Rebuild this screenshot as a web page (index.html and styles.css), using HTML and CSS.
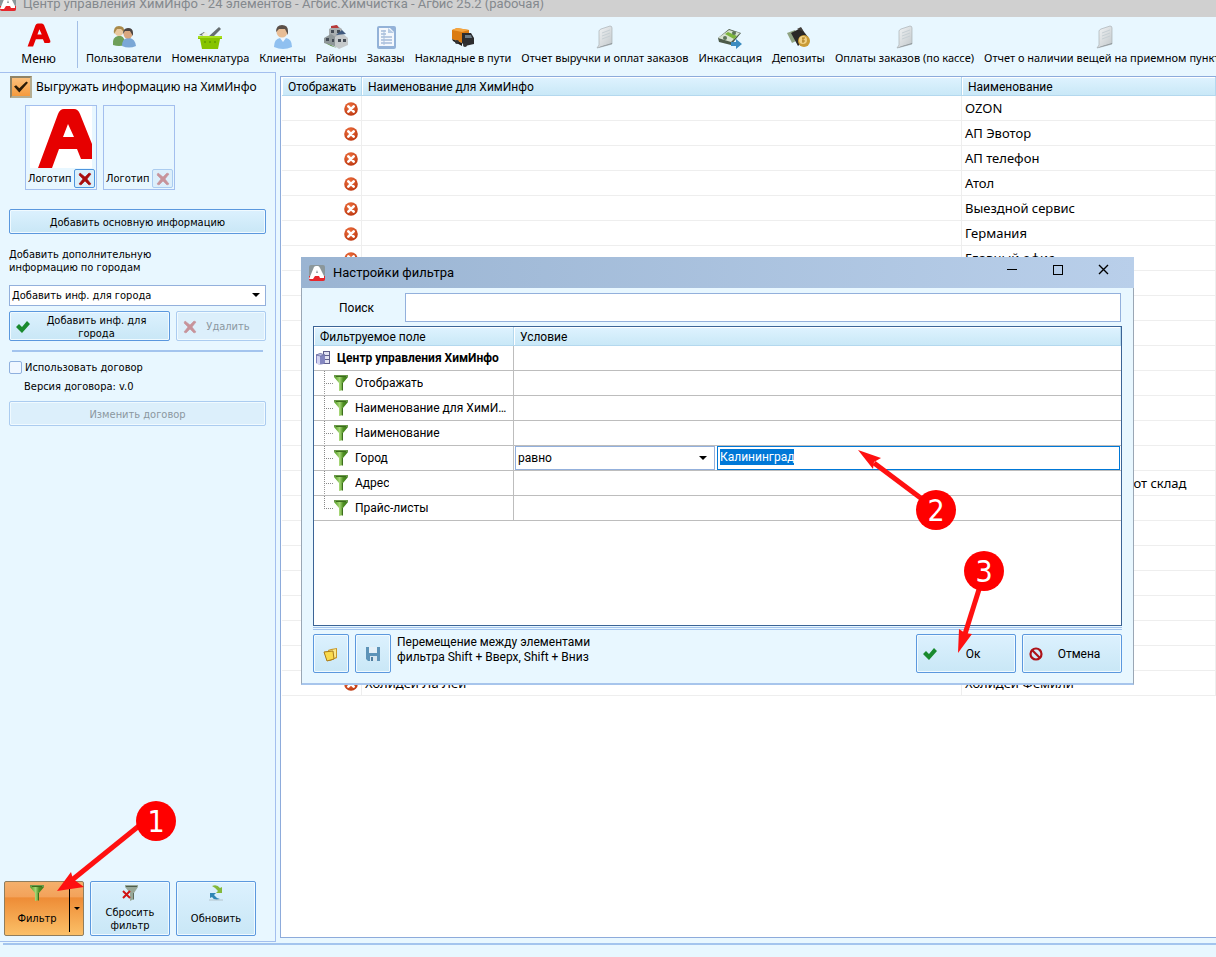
FILE: index.html
```html
<!DOCTYPE html>
<html lang="ru">
<head>
  <meta charset="UTF-8">
  <title>Центр управления ХимИнфо</title>
  <link rel="stylesheet" href="styles.css">
</head>
<body>
  <!-- общие иконки -->
  <svg class="defs" width="0" height="0">
    <defs>
      <linearGradient id="gFunnel" x1="0" x2="1" y1="0" y2="0">
        <stop offset="0" stop-color="#4d9a1c"/><stop offset=".4" stop-color="#a5d675"/><stop offset=".65" stop-color="#4f8f22"/><stop offset="1" stop-color="#3b7a1a"/>
      </linearGradient>
      <radialGradient id="gCross" cx=".4" cy=".3" r=".8">
        <stop offset="0" stop-color="#f0713f"/><stop offset="1" stop-color="#b8330c"/>
      </radialGradient>
      <linearGradient id="gSheet" x1="0" x2="1" y1="0" y2="1">
        <stop offset="0" stop-color="#f3f5f6"/><stop offset="1" stop-color="#c2c8cb"/>
      </linearGradient>
      <symbol id="logo" viewBox="7 2 60 61">
        <path fill="#e60000" fill-rule="evenodd" d="M8 62L28 8Q30 3 34 3H44Q48 3 50 8L66 48Q67 53 62 53H51L47 43H29L22 62ZM33 31L38 18L44 31Z"/>
      </symbol>
      <symbol id="appicon" viewBox="0 0 16 16">
        <rect width="16" height="16" rx="2" fill="#8b979b"/>
        <path fill="#e8262c" d="M0 11H16V14Q16 16 14 16H2Q0 16 0 14Z"/>
        <path fill="#fff" fill-rule="evenodd" d="M0 14L5 2Q6 1 7 1H9Q10 1 11 3L15 11V13H11L10 11H6L4 14ZM7 8L8 5L9 8Z"/>
      </symbol>
      <symbol id="no" viewBox="0 0 14 14">
        <circle cx="7" cy="7" r="6.800" fill="url(#gCross)"/>
        <path d="M4.300 4.300L9.700 9.700M9.700 4.300L4.300 9.700" stroke="#fff" stroke-width="2.600" stroke-linecap="round"/>
      </symbol>
      <symbol id="funnel" viewBox="0 0 14 16">
        <path d="M0 0H14V2L9 8V15L5 16V8L0 2Z" fill="url(#gFunnel)"/>
        <path d="M0 0H14V2H0Z" fill="#6a9a4a"/><path d="M2 1H12V2H2Z" fill="#3c6b1c"/>
        <path d="M8 8H9V15L8 16Z" fill="#3d6d1e"/>
      </symbol>
      <symbol id="check" viewBox="0 0 14 12">
        <path d="M0 6L3 3L6 6L11 0L14 3L6 12Z" fill="#1a8a2e"/>
      </symbol>
      <symbol id="cross" viewBox="0 0 14 14">
        <path d="M2 1L7 5L11 1L13 2L9 7L13 12L11 13L7 9L3 13L1 12L5 7L1 3Z" fill="#a80c0c" stroke="#a80c0c" stroke-width=".6"/>
      </symbol>
      <symbol id="sheet" viewBox="0 0 24 24">
        <path d="M8 4L17 1Q19 1 19 3V19L8 22L4 23L6 20V6Q6 5 8 4Z" fill="url(#gSheet)" stroke="#aab2b6" stroke-width=".7"/>
        <path d="M9 8L17 5M9 11L17 8M9 14L17 11" stroke="#c6cfd4"/>
        <path d="M4 23L9 21L19 18V19L8 22Z" fill="#8f979b"/>
      </symbol>
    </defs>
  </svg>

  <div class="titlebar">
    <svg class="app-icon" width="16" height="16"><use href="#appicon"/></svg>
    <span>Центр управления ХимИнфо - 24 элементов - Агбис.Химчистка - Агбис 25.2 (рабочая)</span>
  </div>

  <div class="toolbar">
    <button class="menu"><svg width="24" height="24"><use href="#logo"/></svg>Меню</button>
    <button class="tool">
      <svg width="24" height="24" viewBox="0 0 24 24">
        <path d="M1 20Q0 12 6 11H9Q13 12 13 20Q7 22 1 20Z" fill="#6e9f58"/>
        <circle cx="7" cy="6.500" r="4.500" fill="#e9c9a0"/><path d="M2 9Q1 1 7 1T12 7L9 4H5Z" fill="#a98a4b"/>
        <path d="M10 21Q10 14 15 13H18Q23 14 24 21Q17 24 10 21Z" fill="#7ba7d6"/>
        <circle cx="16" cy="9" r="4.500" fill="#d9a77f"/><path d="M11 9Q11 3 16 3T21 8V11L18 6H13Z" fill="#4b4442"/>
      </svg>Пользователи</button>
    <button class="tool">
      <svg width="24" height="24" viewBox="0 0 24 24">
        <path d="M1 10L6 7L10 12L21 2L23 4L15 12Z" fill="#666e70"/><path d="M4 9L8 7L11 11H5Z" fill="#eef0e6"/>
        <path d="M0 11H24V14H22L20 24H4L2 14H0Z" fill="#86c400"/>
        <path d="M0 11H24V13H0Z" fill="#a7df1d"/>
        <path d="M6 16H8V18H6ZM11 16H13V18H11ZM16 16H18V18H16Z" fill="#6aa600"/>
      </svg>Номенклатура</button>
    <button class="tool">
      <svg width="24" height="24" viewBox="0 0 24 24">
        <path d="M3 22Q3 14 9 13H15Q21 14 21 22Q12 26 3 22Z" fill="#8fc0f0"/><path d="M9 13L12 17L15 13Z" fill="#eef6ff"/>
        <circle cx="11" cy="7" r="5.500" fill="#e8bd95"/><path d="M5 7Q5 0 11 0T17 6V10L14 4H8Z" fill="#5b5049"/>
      </svg>Клиенты</button>
    <button class="tool">
      <svg width="24" height="24" viewBox="0 0 24 24">
        <path d="M5 4L12 0L18 4V12H5Z" fill="#a9aeb0"/><path d="M7 1L13 0L15 3H7Z" fill="#b83a3a"/>
        <path d="M0 13L7 9L13 13V22L7 20L0 18Z" fill="#8f9799"/><path d="M11 12L18 8L24 13V20L15 24L11 21Z" fill="#c5c9cb"/>
        <path d="M7 5H10V8H7ZM13 5H16V8H13ZM2 13H5V16H2ZM8 14H10V17H8ZM14 14H17V17H14ZM19 14H22V17H19Z" fill="#454c55"/>
        <path d="M12 10L18 5L22 9Z" fill="#3f597e"/><path d="M1 18L7 20L13 23L7 21Z" fill="#57863c"/>
      </svg>Районы</button>
    <button class="tool">
      <svg width="24" height="24" viewBox="0 0 24 24">
        <rect x="3" y="1" width="19" height="23" rx="2" fill="#93b2d8"/><path d="M5 3H16L20 7V21H5Z" fill="#f4f8fd"/>
        <path d="M14 3L20 8H14Z" fill="#b6cbe5"/>
        <path d="M7 6H12M7 9H12M7 12H18M7 15H18M7 18H18" stroke="#7e9dc8"/><path d="M10 5V20" stroke="#a9c0dd"/>
      </svg>Заказы</button>
    <button class="tool">
      <svg width="24" height="24" viewBox="0 0 24 24">
        <path d="M1 5L6 3L18 5V16L11 18L1 14Z" fill="#db7c12"/><path d="M1 5L6 3L18 5L11 7Z" fill="#f6a640"/>
        <path d="M11 8L20 8L23 13V19L14 21L11 18Z" fill="#2d2d2f"/><path d="M14 10L20 10L21 13H14Z" fill="#6d7c86"/>
        <path d="M1 14L11 18V21L2 16Z" fill="#1e1a17"/><circle cx="14" cy="20" r="2" fill="#333"/><circle cx="6" cy="17" r="2" fill="#333"/>
      </svg>Накладные в пути</button>
    <button class="tool"><svg width="24" height="24"><use href="#sheet"/></svg>Отчет выручки и оплат заказов</button>
    <button class="tool">
      <svg width="24" height="24" viewBox="0 0 24 24">
        <path d="M0 13L11 4L23 8L13 20L1 17Z" fill="#4c5a49"/><path d="M0 13L11 5L22 8L13 17Z" fill="#d7e2d1"/>
        <path d="M7 9L10 7L19 11L16 14Z" fill="#7cb43c"/><circle cx="7" cy="13" r="2" fill="#5d7358"/><circle cx="16" cy="8" r="2" fill="#5d7358"/>
        <path d="M13 17H18V14L24 19L18 24V21H13Z" fill="#3c8cc0"/>
      </svg>Инкассация</button>
    <button class="tool">
      <svg width="24" height="24" viewBox="0 0 24 24">
        <path d="M1 8L9 5L14 14L6 18Z" fill="#8fa382"/><path d="M5 8L15 3L22 12L12 21Z" fill="#2b2927"/>
        <path d="M11 4L15 2L18 7Z" fill="#413d39"/><circle cx="18" cy="16" r="6" fill="#c99b35"/><circle cx="17" cy="15" r="4" fill="#f0d083"/>
        <path d="M16 13H19M17 13V18M16 16H19" stroke="#aa7a1c"/>
      </svg>Депозиты</button>
    <button class="tool"><svg width="24" height="24"><use href="#sheet"/></svg>Оплаты заказов (по кассе)</button>
    <button class="tool"><svg width="24" height="24"><use href="#sheet"/></svg>Отчет о наличии вещей на приемном пункте</button>
  </div>

  <div class="main">
    <div class="side">
      <label class="upload"><input type="checkbox" class="big-check" checked>Выгружать информацию на ХимИнфо</label>
      <div class="logos">
        <div class="logo-card">
          <div class="pic"><svg width="62" height="62" viewBox="0 0 62 62"><use href="#logo" x="7" y="2" width="60" height="61"/></svg></div>
          <div class="logo-foot">Логотип<button class="del" aria-label="Удалить логотип"><svg width="14" height="14"><use href="#cross"/></svg></button></div>
        </div>
        <div class="logo-card">
          <div class="pic none"></div>
          <div class="logo-foot">Логотип<button class="del" disabled aria-label="Удалить логотип"><svg width="14" height="14"><use href="#cross"/></svg></button></div>
        </div>
      </div>
      <button class="btn wide">Добавить основную информацию</button>
      <label class="hint" for="city">Добавить дополнительную<br>информацию по городам</label>
      <div class="combo">
        <select id="city"><option>Добавить инф. для города</option></select>
      </div>
      <div class="pair">
        <button class="btn add"><svg width="14" height="12"><use href="#check"/></svg><span>Добавить инф. для города</span></button>
        <button class="btn remove" disabled><svg width="14" height="14"><use href="#cross"/></svg><span>Удалить</span></button>
      </div>
      <hr>
      <label class="contract"><input type="checkbox" class="small-check">Использовать договор</label>
      <div class="version">Версия договора: v.0</div>
      <button class="btn wide" disabled>Изменить договор</button>

      <div class="actions">
        <div class="split">
          <button class="filter"><svg width="14" height="16"><use href="#funnel"/></svg><span>Фильтр</span></button>
          <button class="drop" aria-label="Список фильтров"></button>
        </div>
        <button class="btn act">
          <svg width="16" height="16" viewBox="0 0 16 16">
            <path d="M3 0H16V2L12 8V14L8 16V8L3 2Z" fill="#98a898"/><path d="M4 1H15V2H4Z" fill="#4d5c4d"/><path d="M11 8H12V14L11 15Z" fill="#5d6c5d"/>
            <path d="M1 6L8 13M8 6L1 13" stroke="#d01414" stroke-width="2"/>
          </svg><span>Сбросить фильтр</span></button>
        <button class="btn act">
          <svg width="16" height="16" viewBox="0 0 16 16">
            <path d="M4 1Q9 -1 12 3L14 2V8H8L10 6Q8 3 4 1Z" fill="#84b83c"/>
            <path d="M2 8H8L6 10Q8 13 12 14Q6 16 4 12L2 13Z" fill="#2f86b4"/><path d="M1 15H15" stroke="#b4c4cc"/>
          </svg><span>Обновить</span></button>
      </div>
    </div>

    <div class="grid">
      <table>
        <colgroup><col class="c-show"><col class="c-chem"><col></colgroup>
        <thead><tr><th>Отображать</th><th>Наименование для ХимИнфо</th><th>Наименование</th></tr></thead>
        <tbody>
          <tr><td><svg><use href="#no"/></svg></td><td></td><td>OZON</td></tr>
          <tr><td><svg><use href="#no"/></svg></td><td></td><td>АП Эвотор</td></tr>
          <tr><td><svg><use href="#no"/></svg></td><td></td><td>АП телефон</td></tr>
          <tr><td><svg><use href="#no"/></svg></td><td></td><td>Атол</td></tr>
          <tr><td><svg><use href="#no"/></svg></td><td></td><td>Выездной сервис</td></tr>
          <tr><td><svg><use href="#no"/></svg></td><td></td><td>Германия</td></tr>
          <tr><td><svg><use href="#no"/></svg></td><td></td><td>Главный офис</td></tr>
          <tr><td><svg><use href="#no"/></svg></td><td></td><td></td></tr>
          <tr><td><svg><use href="#no"/></svg></td><td></td><td></td></tr>
          <tr><td><svg><use href="#no"/></svg></td><td></td><td></td></tr>
          <tr><td><svg><use href="#no"/></svg></td><td></td><td></td></tr>
          <tr><td><svg><use href="#no"/></svg></td><td></td><td></td></tr>
          <tr><td><svg><use href="#no"/></svg></td><td></td><td></td></tr>
          <tr><td><svg><use href="#no"/></svg></td><td></td><td></td></tr>
          <tr><td><svg><use href="#no"/></svg></td><td></td><td></td></tr>
          <tr><td><svg><use href="#no"/></svg></td><td></td><td>Не использовать сейчас этот склад</td></tr>
          <tr><td><svg><use href="#no"/></svg></td><td></td><td></td></tr>
          <tr><td><svg><use href="#no"/></svg></td><td></td><td></td></tr>
          <tr><td><svg><use href="#no"/></svg></td><td></td><td></td></tr>
          <tr><td><svg><use href="#no"/></svg></td><td></td><td></td></tr>
          <tr><td><svg><use href="#no"/></svg></td><td></td><td></td></tr>
          <tr><td><svg><use href="#no"/></svg></td><td></td><td></td></tr>
          <tr><td><svg><use href="#no"/></svg></td><td></td><td></td></tr>
          <tr><td><svg><use href="#no"/></svg></td><td>Холидей Ла Лей</td><td>Холидей Фемили</td></tr>
        </tbody>
      </table>
    </div>
  </div>
  <div class="status"></div>

  <!-- окно фильтра -->
  <div class="dialog" role="dialog" aria-labelledby="dlgTitle">
    <div class="dlg-title">
      <svg width="16" height="16"><use href="#appicon"/></svg>
      <span id="dlgTitle">Настройки фильтра</span>
      <button aria-label="Свернуть"><svg width="12" height="12"><path d="M1 5.500H11" stroke="#000"/></svg></button>
      <button aria-label="Развернуть"><svg width="12" height="12"><rect x="1.500" y="1.500" width="9" height="9" fill="none" stroke="#000"/></svg></button>
      <button aria-label="Закрыть"><svg width="12" height="12"><path d="M1 1L10 10M10 1L1 10" stroke="#000" stroke-width="1.400"/></svg></button>
    </div>
    <div class="dlg-body">
      <div class="search"><label for="search">Поиск</label><input type="text" id="search"></div>
      <div class="fields">
        <table>
          <colgroup><col class="c-field"><col></colgroup>
          <thead><tr><th>Фильтруемое поле</th><th>Условие</th></tr></thead>
          <tbody>
            <tr class="root"><td><div>
              <svg width="14" height="14" viewBox="0 0 14 14">
                <rect x="7.500" y=".5" width="6" height="12" fill="#e3e3f2" stroke="#5f5f8c"/><path d="M8 4.500H14M8 8.500H14" stroke="#5f5f8c"/>
                <path d="M0 4Q4 1 9 4V12Q4 15 0 12Z" fill="#8486c0"/><path d="M1 4H4V13H1Z" fill="#d3d4f2"/><path d="M0 4Q4 1 9 4Q4 6 0 4Z" fill="#c4c6e6" stroke="#5f6198" stroke-width=".7"/>
              </svg>Центр управления ХимИнфо</div></td><td></td></tr>
            <tr class="leaf"><td><div><svg width="14" height="16"><use href="#funnel"/></svg><span>Отображать</span></div></td><td></td></tr>
            <tr class="leaf"><td><div><svg width="14" height="16"><use href="#funnel"/></svg><span>Наименование для ХимИнфо</span></div></td><td></td></tr>
            <tr class="leaf"><td><div><svg width="14" height="16"><use href="#funnel"/></svg><span>Наименование</span></div></td><td></td></tr>
            <tr class="leaf"><td><div><svg width="14" height="16"><use href="#funnel"/></svg><span>Город</span></div></td>
              <td><div class="cond">
                <div class="combo"><select aria-label="Условие"><option>равно</option></select></div>
                <input type="text" id="value" value="Калининград" aria-label="Значение">
              </div></td></tr>
            <tr class="leaf"><td><div><svg width="14" height="16"><use href="#funnel"/></svg><span>Адрес</span></div></td><td></td></tr>
            <tr class="leaf last"><td><div><svg width="14" height="16"><use href="#funnel"/></svg><span>Прайс-листы</span></div></td><td></td></tr>
          </tbody>
        </table>
      </div>
      <div class="dlg-foot">
        <button class="btn sq" aria-label="Открыть">
          <svg width="16" height="16" viewBox="0 0 16 16"><path d="M1 6L5 5V4L8 3L14 2V12L7 15H4Z" fill="#c8982a"/><path d="M5 5L13 3V11L7 14Z" fill="#fbe98a"/><path d="M1 6L10 5L11 13L4 15Z" fill="#fada4c" stroke="#a87d1e"/></svg>
        </button>
        <button class="btn sq" aria-label="Сохранить">
          <svg width="16" height="16" viewBox="0 0 16 16"><path d="M1 1H15V15H3L1 13Z" fill="#5d93b8"/><rect x="4" y="1" width="8" height="6" fill="#e4f0f8"/><rect x="5" y="10" width="7" height="5" fill="#d5e5f0"/><rect x="6" y="11" width="2" height="4" fill="#4d7d9e"/></svg>
        </button>
        <p>Перемещение между элементами<br>фильтра Shift + Вверх, Shift + Вниз</p>
        <button class="btn big"><svg width="14" height="12"><use href="#check"/></svg><span>Ок</span></button>
        <button class="btn big"><svg width="14" height="14" viewBox="0 0 14 14"><circle cx="7" cy="7" r="5.500" fill="none" stroke="#ad1218" stroke-width="2.200"/><path d="M3 3L11 11" stroke="#ad1218" stroke-width="2.200"/></svg><span>Отмена</span></button>
      </div>
    </div>
  </div>

  <!-- стрелки с номерами шагов -->
  <svg class="arrows" width="1216" height="957">
    <g stroke="#ff1010" stroke-width="5">
      <path d="M145 821L72 880"/><path d="M926 502L874 463"/><path d="M981 583L965 634"/>
    </g>
    <g fill="#ff1010">
      <path d="M57 891L71 872L73 879L84 887Z"/><path d="M858 450L881 458L874 462L873 469Z"/><path d="M958 653L959 629L965 633L972 634Z"/>
    </g>
  </svg>
  <div class="step s1">1</div>
  <div class="step s2">2</div>
  <div class="step s3">3</div>

<script>
  var value = document.getElementById('value');
  value.focus();
  value.select();
</script>
</body>
</html>
```
FILE: styles.css
```css
*{
  box-sizing: border-box;
}
body{
  margin: 0;
  height: 100vh;
  display: flex;
  flex-direction: column;
  overflow: hidden;
  position: relative;
  background: #e8f7ff;
  color: #000;
  font: 12px/16px Roboto, sans-serif;
}
button,input,select{
  font: inherit;
  color: inherit;
}
button{
  padding: 0;
  border: 0;
  background: none;
}
svg{
  flex: none;
}
.defs{
  position: absolute;
}
/* заголовок */
.titlebar{
  flex: none;
  height: 17px;
  display: flex;
  gap: 7px;
  background: #d0d0d0;
  color: #84898e;
  font-size: 13px;
  line-height: 8px;
}
.app-icon{
  margin-top: -5px;
}
/* панель инструментов */
.toolbar{
  flex: none;
  height: 55px;
  padding-top: 4px;
  display: flex;
  gap: 10px;
  overflow: hidden;
  font: 11px/16px "Noto Sans", sans-serif;
}
.toolbar button{
  flex: none;
  display: flex;
  flex-direction: column;
  align-items: center;
  white-space: nowrap;
}
.toolbar .menu{
  width: 78px;
  height: 47px;
  margin-right: -2px;
  gap: 4px;
  padding-top: 2px;
  border-right: 1px solid #a3bfe6;
  font-size: 12px;
}
.tool{
  gap: 1px;
  padding-top: 4px;
}
/* основная часть */
.main{
  flex: 1;
  min-height: 0;
  display: flex;
  gap: 4px;
}
.side{
  flex: none;
  width: 276px;
  padding: 3px 9px 5px;
  display: flex;
  flex-direction: column;
  border: 1px solid #a3bfee;
  border-left: 0;
  font: 11px/13px "DejaVu Sans Condensed", "DejaVu Sans", sans-serif;
}
.upload{
  display: flex;
  align-items: center;
  gap: 4px;
  padding-left: 1px;
  font: 12px/22px "Noto Sans", sans-serif;
  white-space: nowrap;
}
input[type=checkbox]{
  appearance: none;
  flex: none;
  margin: 0;
}
.big-check{
  width: 22px;
  height: 22px;
  border: 2px solid;
  border-color: #8f8467 #b5ad92 #b5ad92 #8f8467;
  background: linear-gradient(#fbc07c, #f59a3c);
}
.big-check::before{
  content: "";
  display: block;
  width: 14px;
  height: 12px;
  margin: 3px 2px;
  background: #2a1c08;
  clip-path: polygon(0 45%, 15% 35%, 38% 60%, 88% 5%, 100% 15%, 38% 95%);
}
.logos{
  display: flex;
  gap: 6px;
  margin: 7px 0 19px 16px;
}
.logo-card{
  width: 72px;
  height: 85px;
  border: 1px solid #a3bfee;
}
.pic{
  width: 62px;
  height: 62px;
  margin: 0 4px;
  background: #fff;
}
.none{
  background: none;
}
.logo-foot{
  display: flex;
  align-items: center;
  justify-content: space-between;
  padding: 1px 1px 0 2px;
}
.del{
  display: flex;
  align-items: center;
  justify-content: center;
  width: 21px;
  height: 19px;
  border: 1px solid #4e95de;
  border-radius: 2px;
  background: #d9effb;
}
.btn{
  border: 1px solid #5b98de;
  border-radius: 2px;
  box-shadow: inset 0 0 0 1px #f0faff;
  background: linear-gradient(#dcf1fe, #c9e7f6);
}
button:disabled{
  border-color: #abccf0;
  background: #dceffb;
  color: #8b979f;
}
button:disabled svg{
  opacity: .4;
}
.wide{
  height: 25px;
  padding-top: 1px;
}
.hint{
  margin: 14px 0 11px;
}
.combo{
  position: relative;
  height: 21px;
}
.combo::after{
  content: "";
  position: absolute;
  right: 6px;
  top: 8px;
  border: 4px solid transparent;
  border-top: 4px solid #000;
  border-bottom: 0;
}
.combo select{
  appearance: none;
  width: 100%;
  height: 100%;
  padding: 0 2px;
  border: 1px solid #93b0dc;
  border-radius: 0;
  background: #fff;
}
.pair{
  display: flex;
  gap: 6px;
  margin-top: 5px;
}
.pair .btn{
  height: 30px;
  display: flex;
  align-items: center;
  padding: 1px 6px 0;
}
.pair span{
  flex: 1;
  padding: 0 8px;
}
.add{
  width: 161px;
}
.remove{
  width: 90px;
}
hr{
  width: 251px;
  height: 2px;
  margin: 9px 3px;
  border: 0;
  background: #a3c4ee;
}
.contract{
  display: flex;
  align-items: center;
  gap: 3px;
}
.small-check{
  width: 13px;
  height: 13px;
  border: 1px solid #8fb0de;
  border-radius: 2px;
  background: #f0f7ff;
}
.version{
  margin: 6px 0 8px 15px;
}
.actions{
  display: flex;
  gap: 6px;
  margin: auto 0 0 -5px;
}
.split{
  display: flex;
  width: 80px;
  height: 55px;
  border: 1px solid #8f7e5e;
  border-radius: 2px;
  background: linear-gradient(#f4b06c, #f3a25a 28%, #ee8c36 30%, #fbc068);
}
.filter,.act{
  display: flex;
  flex-direction: column;
  align-items: center;
  padding: 3px 0;
}
.filter{
  width: 64px;
}
.filter span,.act span{
  margin: auto;
}
.filter span{
  padding-top: 4px;
}
.drop{
  flex: 1;
  margin: 3px 0;
  border-left: 1px solid #000;
}
.drop::after{
  content: "";
  display: block;
  width: 0;
  margin: 0 auto;
  border: 3px solid transparent;
  border-top-color: #000;
  border-bottom: 0;
}
.act{
  width: 80px;
  height: 55px;
}
.act span{
  padding-top: 4px;
}
/* таблица */
.grid{
  flex: 1;
  min-width: 0;
  margin: 4px 0;
  padding-left: 1px;
  overflow: hidden;
  border: 1px solid #8dabdb;
  border-right: 0;
  background: #fff;
}
table{
  width: 100%;
  table-layout: fixed;
  border-collapse: separate;
  border-spacing: 0;
}
th{
  height: 19px;
  padding: 1px 6px 0;
  border-right: 1px solid #b4d8ee;
  border-bottom: 1px solid #b4d8ee;
  box-shadow: inset 1px 1px #fff;
  background: linear-gradient(#dff3ff, #c9e8f7);
  font-weight: normal;
  text-align: left;
  white-space: nowrap;
}
.c-show{
  width: 80px;
}
.c-chem{
  width: 600px;
}
.grid td{
  height: 25px;
  padding: 0 3px;
  border-right: 1px solid #eee;
  border-bottom: 1px solid #eee;
  font-family: "Noto Sans", sans-serif;
  font-size: 13px;
  white-space: nowrap;
}
.grid td:first-child{
  text-align: right;
}
.grid td svg{
  display: block;
  width: 14px;
  height: 14px;
  margin: 2px 0 0 auto;
}
.status{
  flex: none;
  height: 14px;
  margin: 1px 0 0 3px;
  border-top: 2px solid #a3c4ee;
}
/* окно настроек */
.dialog{
  position: absolute;
  left: 301px;
  top: 257px;
  width: 833px;
  border: 1px solid #9aa7b5;
  border-top: 0;
  border-bottom: 2px solid #a7c5ec;
  background: #e8f7ff;
}
.dlg-title{
  display: flex;
  align-items: center;
  height: 31px;
  margin: 0 -1px;
  padding-left: 8px;
  background: linear-gradient(90deg, #9ab4d2, #b9cfea);
  font-size: 13px;
}
.dlg-title span{
  flex: 1;
  padding-left: 8px;
}
.dlg-title button{
  display: flex;
  justify-content: center;
  width: 46px;
  padding-bottom: 6px;
}
.dlg-title button:last-child{
  margin-right: 7px;
}
.dlg-body{
  padding: 5px 11px 10px;
}
.search{
  display: flex;
  align-items: center;
  margin-bottom: 4px;
}
.search label{
  width: 92px;
  padding-left: 26px;
}
.search input{
  flex: 1;
  height: 29px;
  border: 1px solid #93b0dc;
  margin-right: 1px;
}
.fields{
  height: 300px;
  border: 1px solid #3b6496;
  background: #fff;
}
.c-field{
  width: 200px;
}
.fields td{
  height: 25px;
  padding: 0;
  border-right: 1px solid #bdbdbd;
  border-bottom: 1px solid #bdbdbd;
}
.fields td:last-child{
  border-right: 0;
}
.fields td > div{
  display: flex;
  align-items: center;
  height: 24px;
}
.root div{
  gap: 7px;
  padding-left: 2px;
  font-weight: bold;
  white-space: nowrap;
}
.leaf td:first-child div{
  gap: 7px;
  padding: 0 4px 0 10px;
}
.leaf td:first-child div::before{
  content: "";
  flex: none;
  align-self: flex-start;
  width: 8px;
  height: 12px;
  margin-right: -6px;
  border-left: 1px dotted #888;
  border-bottom: 1px dotted #888;
}
.leaf:not(.last) td:first-child{
  background: repeating-linear-gradient(#999 0 1px, transparent 1px 2px) 10px 0 / 1px 100% no-repeat;
}
.leaf span{
  overflow: hidden;
  text-overflow: ellipsis;
  white-space: nowrap;
}
.fields .cond{
  gap: 2px;
  padding: 0 1px;
}
.cond .combo{
  width: 200px;
  height: 24px;
}
.cond .combo::after{
  right: 8px;
  top: 10px;
}
.cond input{
  flex: 1;
  align-self: stretch;
  padding: 0 2px 2px;
  border: 1px solid #0078d7;
  outline: 0;
}
.cond input::selection{
  background: #0078d7;
  color: #fff;
}
.dlg-foot{
  display: flex;
  gap: 6px;
  margin-top: 1px;
  padding-top: 4px;
  border-top: 3px double #a3c4ee;
}
.dlg-foot p{
  flex: 1;
  margin: 1px 0 0;
  line-height: 15px;
}
.sq{
  display: flex;
  align-items: center;
  justify-content: center;
  width: 36px;
  height: 39px;
}
.big{
  display: flex;
  align-items: center;
  width: 100px;
  height: 39px;
  padding: 0 6px;
}
.big span{
  flex: 1;
}
/* номера шагов */
.arrows{
  position: absolute;
  left: 0;
  top: 0;
}
.step{
  position: absolute;
  width: 40px;
  height: 40px;
  border-radius: 50%;
  background: #f00;
  color: #fff;
  font: 30px/42px "DejaVu Sans Condensed", sans-serif;
  text-align: center;
}
.s1{
  left: 136px;
  top: 801px;
}
.s2{
  left: 916px;
  top: 490px;
}
.s3{
  left: 964px;
  top: 551px;
}
```
